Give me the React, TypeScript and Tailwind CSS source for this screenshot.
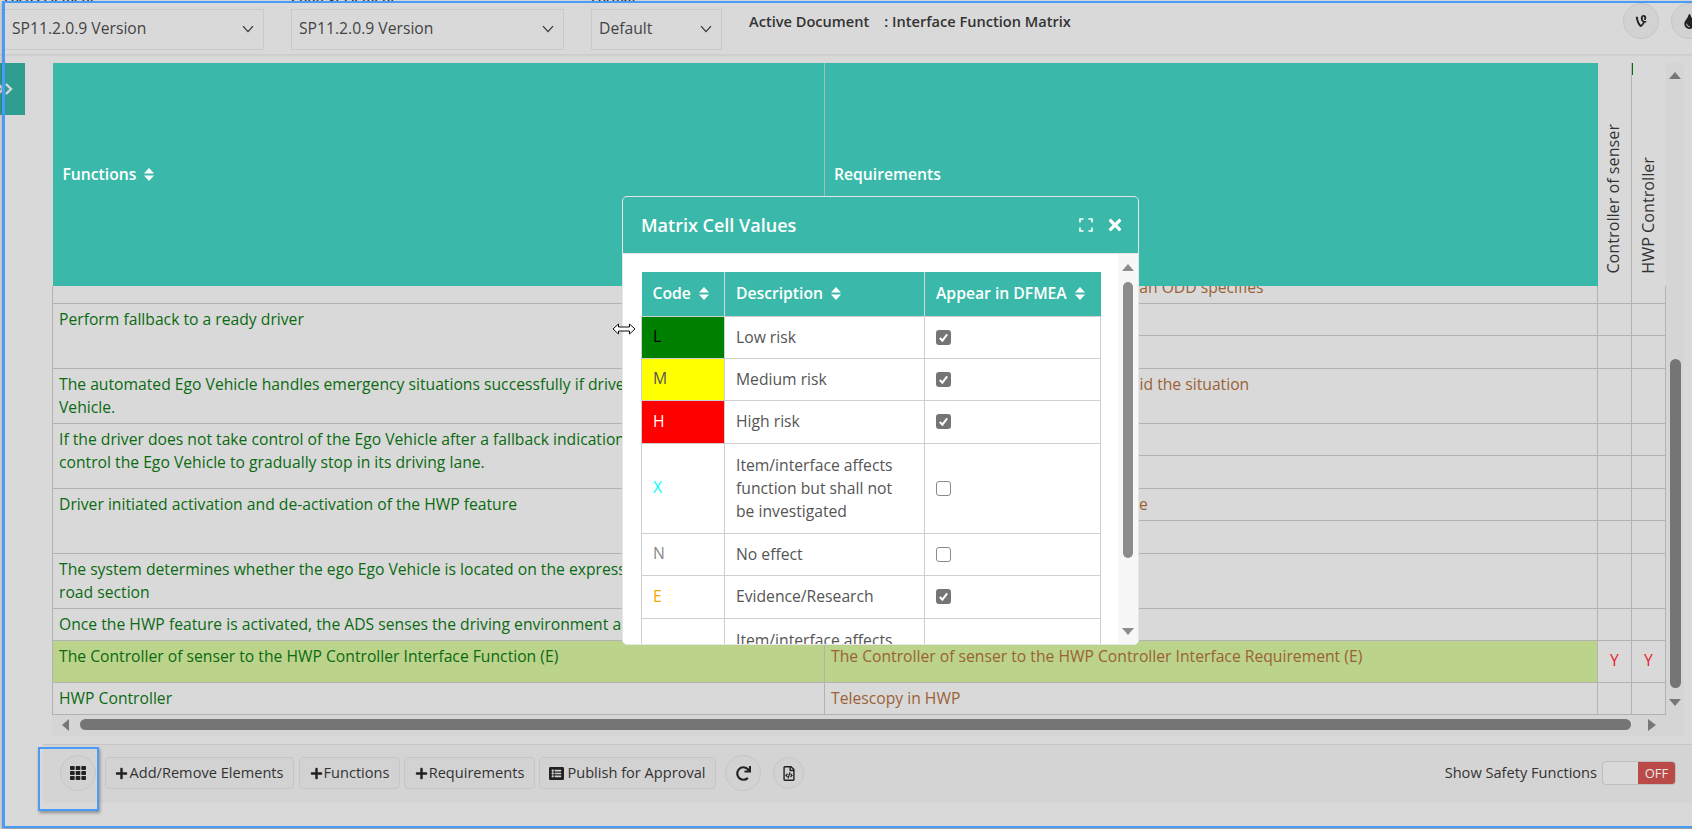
import { FaVine, FaTint, FaTh, FaRedo, FaRegFileCode, FaPlus, FaListAlt, FaTimes } from "react-icons/fa";
import type { ReactNode } from "react";

const FN = "text-[#0b6a12]";
const REQ = "text-[#9a6236]";

function SortIcon() {
  return (
    <svg viewBox="0 0 10 13" className="inline-block w-[10px] h-[13px] ml-[8px] align-[-1px]" fill="currentColor">
      <path d="M5 0 10 5.5H0Z" />
      <path d="M5 13 0 7.5H10Z" />
    </svg>
  );
}

function Select({ label, value, width }: { label: string; value: string; width: string }) {
  return (
    <div className={width}>
      <div className="h-[18px] -mt-[20px] mb-[2px] text-[13px] leading-[18px] font-semibold text-[#333] whitespace-nowrap">{label}</div>
      <div className="h-[41px] border border-[#c9c9c9] flex items-center justify-between pl-[7px] pr-[9px] pb-[1px] text-[15.7px] text-[#444]">
        <span>{value}</span>
        <svg viewBox="0 0 12 8" className="w-[12px] h-[8px]" fill="none" stroke="#333" strokeWidth="1.2">
          <path d="M1 1.2 6 6.6 11 1.2" />
        </svg>
      </div>
    </div>
  );
}

function Btn({ icon, label, width }: { icon: ReactNode; label: string; width: string }) {
  return (
    <div className={`${width} h-[32px] shrink-0 flex items-center justify-center gap-[1px] rounded-[4px] border border-[#c6c6c6] bg-[#d2d2d2] text-[14.6px] text-[#333] whitespace-nowrap`}>
      {icon}
      <span>{label}</span>
    </div>
  );
}

function Check({ on }: { on: boolean }) {
  return on ? (
    <div className="w-[15px] h-[15px] rounded-[3px] bg-[#757575] flex items-center justify-center">
      <svg viewBox="0 0 12 12" className="w-[11px] h-[11px]" fill="none" stroke="#fff" strokeWidth="2.2">
        <path d="M2 6.5 4.8 9.5 10 2.5" />
      </svg>
    </div>
  ) : (
    <div className="w-[15px] h-[15px] rounded-[3px] bg-white border border-[#8a8a8a]" />
  );
}

const cellValues = [
  { code: "L", cell: "bg-[#008000] text-black", desc: "Low risk", on: true, h: "h-[42px]" },
  { code: "M", cell: "bg-[#ffff00] text-[#555]", desc: "Medium risk", on: true, h: "h-[42px]" },
  { code: "H", cell: "bg-[#ff0000] text-white", desc: "High risk", on: true, h: "h-[43px]" },
  { code: "X", cell: "text-[#00ffff]", desc: "Item/interface affects function but shall not be investigated", on: false, h: "h-[90px]" },
  { code: "N", cell: "text-[#888]", desc: "No effect", on: false, h: "h-[42px]" },
  { code: "E", cell: "text-[#ffa500]", desc: "Evidence/Research", on: true, h: "h-[43px]" },
  { code: "", cell: "", desc: "Item/interface affects function and shall be investigated", on: false, h: "h-[90px]" },
];

function MatrixModal() {
  return (
    <div className="absolute left-[622px] top-[196px] w-[517px] h-[449px] bg-white border border-[#e6e6e6] rounded-[5px] overflow-hidden flex flex-col">
      <div className="h-[57px] shrink-0 bg-[#3ab9aa] border-b border-[#e6e6e6] flex items-center pl-[18px] pr-[14px] text-white">
        <span className="text-[18px] font-semibold flex-1">Matrix Cell Values</span>
        <svg viewBox="0 0 14 14" className="w-[14px] h-[14px] mr-[13px]" fill="none" stroke="#fff" strokeWidth="1.6">
          <path d="M1 4.5V1H4.5M9.5 1H13V4.5M13 9.5V13H9.5M4.5 13H1V9.5" />
        </svg>
        <FaTimes className="w-[18px] h-[18px]" />
      </div>
      <div className="flex flex-1 min-h-0">
        <div className="flex-1 pl-[18px] pt-[18px] overflow-hidden">
          <table className="table-fixed border-collapse w-[459px] text-[15.7px] text-[#555]">
            <colgroup>
              <col className="w-[83px]" />
              <col className="w-[200px]" />
              <col className="w-[176px]" />
            </colgroup>
            <thead>
              <tr className="h-[44px] bg-[#3ab9aa] text-white font-semibold text-left">
                <th className="font-semibold pl-[11px] border-r border-[#d8d8d8]">Code<SortIcon /></th>
                <th className="font-semibold pl-[11px] border-r border-[#d8d8d8]">Description<SortIcon /></th>
                <th className="font-semibold pl-[11px] whitespace-nowrap">Appear in DFMEA<SortIcon /></th>
              </tr>
            </thead>
            <tbody>
              {cellValues.map((row) => (
                <tr key={row.desc} className={row.h}>
                  <td className={`border border-[#cfcfcf] pl-[11px] ${row.cell}`}>{row.code}</td>
                  <td className="border border-[#cfcfcf] pl-[11px] pr-[16px] leading-[23px]">{row.desc}</td>
                  <td className="border border-[#cfcfcf] pl-[11px]"><Check on={row.on} /></td>
                </tr>
              ))}
            </tbody>
          </table>
        </div>
        <div className="w-[20px] shrink-0 bg-[#f7f7f7] flex flex-col items-center pt-[10px] relative">
          <div className="w-0 h-0 border-x-[6px] border-x-transparent border-b-[7px] border-b-[#8c8c8c]" />
          <div className="w-[10px] h-[276px] mt-[11px] bg-[#8c8c8c] rounded-[5px]" />
          <div className="absolute top-[374px] w-0 h-0 border-x-[6px] border-x-transparent border-t-[7px] border-t-[#8c8c8c]" />
        </div>
      </div>
    </div>
  );
}

function ResizeCursor() {
  return (
    <svg viewBox="0 0 24 12" className="absolute left-[612px] top-[323px] w-[24px] h-[12px]" fill="#fff" stroke="#111" strokeWidth="1">
      <path d="M1 6 6.5 1V4H17.5V1L23 6 17.5 11V8H6.5V11Z" />
    </svg>
  );
}

export default function App() {
  const td = "border border-[#b2b2b2] align-top px-[6px] pt-[4px] leading-[23px]";
  const narrow = "border border-[#b2b2b2]";
  return (
    <div className="relative w-[1692px] h-[829px] overflow-hidden bg-[#d9d9d9] font-['Open_Sans',sans-serif] text-[15.7px]">
      {/* top selectors */}
      <div className="h-[55px] pt-[9px] pl-[4px] flex border-b border-[#cdcdcd] shadow-[0_1px_1px_rgba(0,0,0,0.04)]">
        <Select label="Focus Element" value="SP11.2.0.9 Version" width="w-[260px]" />
        <div className="w-[27px]" />
        <Select label="Context Element" value="SP11.2.0.9 Version" width="w-[273px]" />
        <div className="w-[27px]" />
        <Select label="Format" value="Default" width="w-[131px]" />
        <div className="pl-[27px] pt-[2px] text-[14.6px] font-semibold text-[#333] flex gap-[15px] w-[900px]">
          <span>Active Document</span>
          <span>: Interface Function Matrix</span>
        </div>
        <div className="flex gap-[12px] absolute left-[1623px] top-[3px]">
          <div className="w-[36px] h-[36px] rounded-full bg-[#d2d2d2] border border-[#c6c6c6] flex items-center justify-center"><FaVine className="w-[14px] h-[14px] text-[#222]" /></div>
          <div className="w-[36px] h-[36px] rounded-full bg-[#d2d2d2] border border-[#c6c6c6] flex items-center justify-center"><FaTint className="w-[15px] h-[15px] text-[#222]" /></div>
        </div>
      </div>

      {/* matrix area */}
      <div className="flex mt-[8px]">
        <div className="w-[25px] h-[52px] shrink-0 bg-[#2f9e90] flex items-center overflow-hidden">
          <svg viewBox="0 0 20 12" className="w-[20px] h-[12px] -ml-[5px]" fill="none" stroke="#d9d9d9" strokeWidth="2.4">
            <path d="M3 1 8 6 3 11M11 1 16 6 11 11" />
          </svg>
        </div>
        <div className="ml-[27px] w-[1632px]">
          <div className="flex">
            <table className="table-fixed border-collapse w-[1613px] text-[15.7px]">
              <colgroup>
                <col className="w-[772px]" />
                <col className="w-[773px]" />
                <col className="w-[34px]" />
                <col className="w-[34px]" />
              </colgroup>
              <thead>
                <tr className="h-[223px]">
                  <th className="bg-[#3ab9aa] text-white text-left font-semibold pl-[10px] border-r border-[#a9b9b5]">Functions<SortIcon /></th>
                  <th className="bg-[#3ab9aa] text-white text-left font-semibold pl-[9px]">Requirements</th>
                  <th className="border-r border-[#b2b2b2] align-bottom font-normal text-[#333] text-[16.2px] pb-[6px] pr-[3px]">
                    <span className="inline-block [writing-mode:vertical-rl] rotate-180 whitespace-nowrap">Controller of senser</span>
                  </th>
                  <th className="relative align-bottom font-normal text-[#333] text-[16.2px] pb-[6px] pr-[2px]">
                    <span className="absolute left-0 top-0 w-[1px] h-[12px] bg-[#0b6a12]" />
                    <span className="inline-block [writing-mode:vertical-rl] rotate-180 whitespace-nowrap">HWP Controller</span>
                  </th>
                </tr>
              </thead>
              <tbody>
                <tr className="h-[17px]">
                  <td className={`${narrow} border-t-0`} />
                  <td className={`${narrow} border-t-0 ${REQ} pl-[9px]`}>
                    <div className="h-[16px] overflow-hidden"><div className="-mt-[10px] leading-[23px]">The ADS shall warn the drivers on leaving an ODD specifies</div></div>
                  </td>
                  <td className={`${narrow} border-t-0`} />
                  <td className={`${narrow} border-t-0`} />
                </tr>
                <tr className="h-[32px]">
                  <td rowSpan={2} className={`${td} ${FN}`}>Perform fallback to a ready driver</td>
                  <td className={narrow} /><td className={narrow} /><td className={narrow} />
                </tr>
                <tr className="h-[33px]"><td className={narrow} /><td className={narrow} /><td className={narrow} /></tr>
                <tr className="h-[55px]">
                  <td className={`${td} ${FN}`}>The automated Ego Vehicle handles emergency situations successfully if driver does not take over the<br />Vehicle.</td>
                  <td className={`${td} ${REQ} pl-[9px]`}>The ADS shall slow down or swerve to avoid the situation</td>
                  <td className={narrow} /><td className={narrow} />
                </tr>
                <tr className="h-[32px]">
                  <td rowSpan={2} className={`${td} ${FN}`}>If the driver does not take control of the Ego Vehicle after a fallback indication, the ADS shall<br />control the Ego Vehicle to gradually stop in its driving lane.</td>
                  <td className={narrow} /><td className={narrow} /><td className={narrow} />
                </tr>
                <tr className="h-[33px]"><td className={narrow} /><td className={narrow} /><td className={narrow} /></tr>
                <tr className="h-[32px]">
                  <td rowSpan={2} className={`${td} ${FN}`}>Driver initiated activation and de-activation of the HWP feature</td>
                  <td className={`${td} ${REQ} pl-[9px]`}>The driver should activate the HWP feature</td>
                  <td className={narrow} /><td className={narrow} />
                </tr>
                <tr className="h-[33px]"><td className={narrow} /><td className={narrow} /><td className={narrow} /></tr>
                <tr className="h-[55px]">
                  <td className={`${td} ${FN}`}>The system determines whether the ego Ego Vehicle is located on the expressway within the ODD<br />road section</td>
                  <td className={narrow} /><td className={narrow} /><td className={narrow} />
                </tr>
                <tr className="h-[32px]">
                  <td className={`${td} ${FN} whitespace-nowrap overflow-hidden`}>Once the HWP feature is activated, the ADS senses the driving environment and the vehicle state</td>
                  <td className={narrow} /><td className={narrow} /><td className={narrow} />
                </tr>
                <tr className="h-[42px]">
                  <td className={`${td} ${FN} bg-[#bbd38b]`}>The Controller of senser to the HWP Controller Interface Function (E)</td>
                  <td className={`${td} ${REQ} bg-[#bbd38b] pl-[6px]`}>The Controller of senser to the HWP Controller Interface Requirement (E)</td>
                  <td className={`${narrow} text-center text-[#e8202a]`}>Y</td>
                  <td className={`${narrow} text-center text-[#e8202a]`}>Y</td>
                </tr>
                <tr className="h-[32px]">
                  <td className={`${td} ${FN}`}>HWP Controller</td>
                  <td className={`${td} ${REQ}`}>Telescopy in HWP</td>
                  <td className={narrow} /><td className={narrow} />
                </tr>
              </tbody>
            </table>
            {/* vertical scrollbar */}
            <div className="w-[19px] bg-[#d5d5d5] relative flex flex-col items-center pt-[9px]">
              <div className="w-0 h-0 border-x-[6px] border-x-transparent border-b-[7px] border-b-[#777]" />
              <div className="absolute left-[4px] top-[296px] w-[11px] h-[329px] rounded-[6px] bg-[#757575]" />
              <div className="absolute left-[3px] top-[636px] w-0 h-0 border-x-[6px] border-x-transparent border-t-[7px] border-t-[#777]" />
            </div>
          </div>
          {/* horizontal scrollbar */}
          <div className="h-[21px] bg-[#d5d5d5] flex items-center pl-[10px] pb-[1px]">
            <div className="w-0 h-0 border-y-[6px] border-y-transparent border-r-[7px] border-r-[#777]" />
            <div className="ml-[11px] w-[1551px] h-[11px] rounded-[6px] bg-[#757575]" />
            <div className="ml-[17px] w-0 h-0 border-y-[6px] border-y-transparent border-l-[8px] border-l-[#777]" />
          </div>
        </div>
      </div>

      {/* footer toolbar */}
      <div className="ml-[43px] mt-[8px] h-[59px] border-t border-[#c4c4c4] bg-[#d4d4d4] flex items-center pl-[17px] pr-[16px] gap-[4px] pb-[1px]">
        <div className="w-[36px] h-[36px] rounded-full bg-[#d2d2d2] border border-[#c6c6c6] flex items-center justify-center mr-[5px] shrink-0"><FaTh className="w-[16px] h-[16px] text-[#222]" /></div>
        <Btn width="w-[189px]" icon={<FaPlus className="w-[13px] h-[13px] text-[#222]" />} label="Add/Remove Elements" />
        <Btn width="w-[101px] ml-[1px]" icon={<FaPlus className="w-[13px] h-[13px] text-[#222]" />} label="Functions" />
        <Btn width="w-[131px]" icon={<FaPlus className="w-[13px] h-[13px] text-[#222]" />} label="Requirements" />
        <Btn width="w-[177px]" icon={<FaListAlt className="w-[15px] h-[15px] text-[#222] mr-[2px]" />} label="Publish for Approval" />
        <div className="w-[36px] h-[36px] ml-[5px] rounded-full bg-[#d2d2d2] border border-[#c6c6c6] flex items-center justify-center shrink-0"><FaRedo className="w-[15px] h-[15px] text-[#222]" /></div>
        <div className="w-[31px] h-[32px] ml-[8px] rounded-full bg-[#d2d2d2] border border-[#c6c6c6] flex items-center justify-center shrink-0"><FaRegFileCode className="w-[12px] h-[15px] text-[#222]" /></div>
        <div className="flex-1" />
        <span className="text-[14.6px] text-[#333] mr-[1px]">Show Safety Functions</span>
        <div className="w-[74px] h-[24px] rounded-[4px] border border-[#bdbdbd] bg-[#d9d9d9] flex justify-end overflow-hidden">
          <span className="w-[37px] bg-[#b94a48] text-[#e8e8e8] text-[13px] leading-[22px] text-center">OFF</span>
        </div>
      </div>

      <MatrixModal />
      <ResizeCursor />

      {/* screenshot annotation frames */}
      <div className="absolute left-[2px] top-[1px] w-[1700px] h-[827px] border-2 border-l-[3px] border-[#4a9bf5] shadow-[0_2px_3px_rgba(0,0,0,0.3)] pointer-events-none" />
      <div className="absolute left-[38px] top-[747px] w-[61px] h-[64px] border-[2px] border-[#4a9bf5] shadow-[1px_2px_3px_rgba(0,0,0,0.35)] pointer-events-none" />
    </div>
  );
}
